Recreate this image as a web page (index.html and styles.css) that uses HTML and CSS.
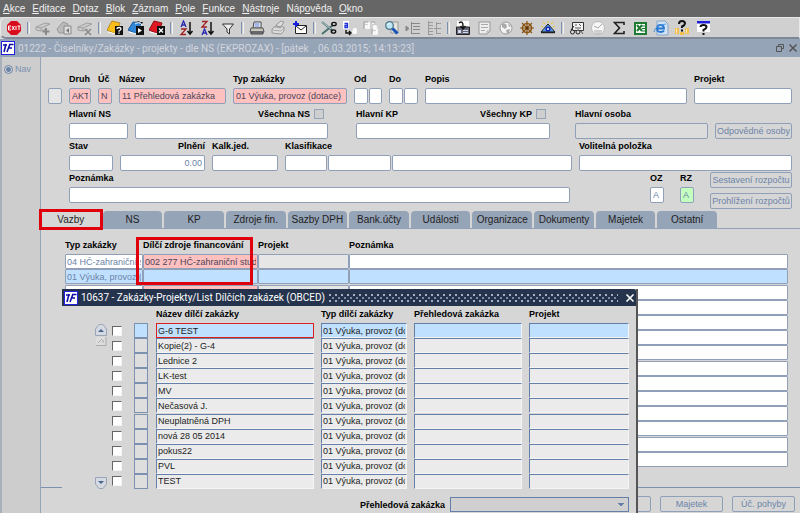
FILE: index.html
```html
<!DOCTYPE html>
<html lang="cs">
<head>
    <meta charset="UTF-8">
    <meta name="viewport" content="width=device-width, initial-scale=1.0">
    <title>01222 - Číselníky/Zakázky</title>
    <link rel="stylesheet" href="styles.css">
</head>
<body>
    <nav class="menubar">
        <a href="#"><u>A</u>kce</a>
        <a href="#"><u>E</u>ditace</a>
        <a href="#"><u>D</u>otaz</a>
        <a href="#"><u>B</u>lok</a>
        <a href="#"><u>Z</u>áznam</a>
        <a href="#"><u>P</u>ole</a>
        <a href="#"><u>F</u>unkce</a>
        <a href="#"><u>N</u>ástroje</a>
        <a href="#">Náp<u>o</u>věda</a>
        <a href="#"><u>O</u>kno</a>
    </nav>

    <div class="toolbar">
        <div class="tools">
            <button aria-label="Konec"><svg viewBox="0 0 16 16"><path d="M5 1h6l4 4v6l-4 4H5l-4-4V5z" fill="#d80c1c"/><path d="M2.500 6v4M2.500 6h2.500M2.500 8h2M2.500 10h2.500M6 6l2.500 4M8.500 6L6 10M10 6v4M11.500 6h3M13 6v4" stroke="#fff" fill="none"/></svg></button>
            <span class="sep"></span>
            <button aria-label="Vložit"><svg viewBox="0 0 16 16"><path d="M1 7l9-4 5 1-9 4zM1 7v3l5 1V8M6 11l5-2" fill="#ccc" stroke="#a0a0a0"/><path d="M11 8v7M7.500 11.500h7" stroke="#888" stroke-width="2"/></svg></button>
            <button aria-label="Kopírovat záznam"><svg viewBox="0 0 16 16"><path d="M1 9l6-7 5 2v9H3z" fill="#bbb" stroke="#999"/><path d="M8 6h7v8H8z" fill="#ddd" stroke="#888"/><path d="M13 8v5l-3-2.500z" fill="#777"/></svg></button>
            <button aria-label="Smazat"><svg viewBox="0 0 16 16"><path d="M1 7l9-4 5 1-9 4zM1 7v3l5 1V8M6 11l5-2" fill="#ccc" stroke="#a0a0a0"/><path d="M8 9l6 6M14 9l-6 6" stroke="#888" stroke-width="1.500"/></svg></button>
            <span class="sep"></span>
            <button aria-label="Zadat dotaz"><svg viewBox="0 0 16 16"><path d="M0 10l5-9 8 2-4 11z" fill="#fbbd18" stroke="#b88a20"/><path d="M1 12l8 2" stroke="#fff"/><path d="M8 6h8v9H8z" fill="#111"/><path d="M10 9q0-1.500 2-1.500T14 9q0 1-2 2v.8M12 12.500v1.300" stroke="#fff" fill="none" stroke-width="1.300"/></svg></button>
            <button aria-label="Provést dotaz"><svg viewBox="0 0 16 16"><path d="M0 10l5-8 8 1-4 11z" fill="#2f86d8" stroke="#205a98"/><path d="M1 12l8 2M7 4q4-3 7 1" stroke="#fff" fill="none"/><path d="M8 2q4-2 6 2l1-2M8 6h8v9H8z" fill="#111"/><path d="M10 8v5l4-2.500z" fill="#fff"/></svg></button>
            <button aria-label="Zrušit dotaz"><svg viewBox="0 0 16 16"><path d="M0 10l5-9 8 2-4 11z" fill="#e01822" stroke="#8d1018"/><path d="M1 12l8 2" stroke="#fff"/><path d="M8 6h8v9H8z" fill="#111"/><path d="M10 8.500l4 4M14 8.500l-4 4" stroke="#fff" stroke-width="1.300"/></svg></button>
            <span class="sep"></span>
            <button aria-label="Seřadit vzestupně"><svg viewBox="0 0 16 16"><path d="M3 7l2.500-6L8 7M4 5h3" fill="none" stroke="#2a2ab0" stroke-width="1.300"/><path d="M3 9h5l-5 5.500h5" fill="none" stroke="#a02020" stroke-width="1.300"/><path d="M12 2v11M9.500 11l2.500 3 2.500-3" stroke="#111" fill="none" stroke-width="1.500"/></svg></button>
            <button aria-label="Seřadit sestupně"><svg viewBox="0 0 16 16"><path d="M3 1.500h5L3 7h5" fill="none" stroke="#a02020" stroke-width="1.300"/><path d="M3 15l2.500-6L8 15M4 13h3" fill="none" stroke="#2a2ab0" stroke-width="1.300"/><path d="M12 2v11M9.500 11l2.500 3 2.500-3" stroke="#111" fill="none" stroke-width="1.500"/></svg></button>
            <button aria-label="Filtr"><svg viewBox="0 0 16 16"><path d="M2.500 4h11L9.500 9v5L7 12V9z" fill="#eee" stroke="#333"/></svg></button>
            <span class="sep"></span>
            <button aria-label="Tisk"><svg viewBox="0 0 16 16"><path d="M5 2h7v6H4z" fill="#fff" stroke="#444"/><path d="M5.500 4h5M5.500 6h5" stroke="#4a6fd0"/><path d="M2 8h12l1 4H1z" fill="#c8c8c0" stroke="#555"/><path d="M2 12h12v2H2z" fill="#8a8a92" stroke="#444"/></svg></button>
            <button aria-label="Náhled tisku"><svg viewBox="0 0 16 16"><path d="M6 5l5-4 3 1-4 6zM2 9l3-3 9 1v4l-3 3-9-1z" fill="#ddd" stroke="#999"/><path d="M2 10l9 1 3-3M4 7l7 1" stroke="#aaa" fill="none"/></svg></button>
            <button aria-label="Nová zpráva"><svg viewBox="0 0 16 16"><path d="M3.500 5.500h11v8h-11z" fill="#fff" stroke="#222"/><path d="M4 6l5 4 5-4" fill="none" stroke="#222"/><path d="M4 1v6M1 4h6" stroke="#1020e0" stroke-width="2"/></svg></button>
            <span class="sep"></span>
            <button aria-label="Vyjmout"><svg viewBox="0 0 16 16"><path d="M1 2l11 9M1 14L12 5" stroke="#4a7070" stroke-width="2"/><path d="M1 2l9 7" stroke="#e8f4f4" stroke-width=".7"/><ellipse cx="13" cy="4" rx="2.200" ry="1.600" fill="none" stroke="#111" stroke-width="1.400"/><ellipse cx="12.500" cy="11.500" rx="2.200" ry="1.600" fill="none" stroke="#111" stroke-width="1.400"/></svg></button>
            <button aria-label="Kopírovat"><svg viewBox="0 0 16 16"><path d="M1 1h6v8H1z" fill="#fff"/><path d="M2.500 3.500h3v4H3v-2h2.500" fill="none" stroke="#2030d8" stroke-width="1.300"/><path d="M4 10v3h4M7 11l2 2-2 2" fill="none" stroke="#111" stroke-width="1.400"/><path d="M11 9h3v4h-3v-2h3" fill="#eee" stroke="#fff" stroke-width="1.400"/></svg></button>
            <button aria-label="Vložit ze schránky"><svg viewBox="0 0 16 16"><path d="M2 3h4v5H2.500V6H6M10 9h4v5h-3.500v-2H14M9 3h3v4M10 6l2 2 2-2" fill="none" stroke="#fff" stroke-width="1.500"/><path d="M1 9V2h4M8 2h4v3M9 14V9" fill="none" stroke="#a0a0a0"/></svg></button>
            <button aria-label="Hledat"><svg viewBox="0 0 16 16"><path d="M7 2h7v11H7z" fill="#e4e4dc" stroke="#999"/><circle cx="5.500" cy="5.500" r="3.800" fill="#bfe6f4" stroke="#50798c" stroke-width="1.300"/><path d="M8.500 8.500l5 5" stroke="#1553b8" stroke-width="3"/><path d="M3.500 5l2-2" stroke="#fff"/></svg></button>
            <button aria-label="Rozbalit"><svg viewBox="0 0 16 16"><path d="M1 6v5l3-2.500zM6.500 2v12M6 3.500h9M8 6.500h7M8 9.500h7M6 13.500h9" fill="#888" stroke="#888"/></svg></button>
            <button aria-label="Stromová struktura"><svg viewBox="0 0 16 16"><path d="M2.500 1v14M2 2.500h5M2 5.500h5M2 8.500h5M2 11.500h5M2 14.500h5M10.500 2v12M10 3.500h5M8 8.500h7M10 13.500h5" fill="none" stroke="#999"/></svg></button>
            <span class="sep"></span>
            <button aria-label="Uložit"><svg viewBox="0 0 16 16"><path d="M2 1h12v6H2z" fill="#fff"/><path d="M1.500 7v7.500h13V7z" fill="#667" stroke="#222"/><path d="M3 10h3v3H3zM8 10h5v1H8zM8 12h5v1H8z" fill="#cfd9f0"/><path d="M4 3q4-3 4 3v3M5.500 6L8 9l2.500-3" fill="none" stroke="#111" stroke-width="1.400"/></svg></button>
            <button aria-label="Poznámka"><svg viewBox="0 0 16 16"><path d="M3 2h11v9l-3 3H3z" fill="#eee" stroke="#999"/><path d="M5 4.500h7M5 7.500h7M5 10.500h4M11 14v-3h3" stroke="#aaa" fill="none"/></svg></button>
            <button aria-label="Web"><svg viewBox="0 0 16 16"><circle cx="8" cy="8" r="6" fill="#f4f4f4" stroke="#999"/><path d="M4 3l4 1 1 3-2 2-3-2zM10 3l3 3-2 1zM8 10l4-1-1 4-2 1z" fill="#aaa"/></svg></button>
            <button aria-label="Navigátor"><svg viewBox="0 0 16 16"><circle cx="8" cy="8" r="4.500" fill="none" stroke="#8a5412" stroke-width="1.600"/><path d="M8 1v14M1 8h14M3 3l10 10M13 3L3 13" stroke="#8a5412" stroke-width="1.200"/><circle cx="8" cy="8" r="1.500" fill="#5c3408"/></svg></button>
            <button aria-label="Zobrazit"><svg viewBox="0 0 16 16"><path d="M8 1v2M3 2l2 2M13 2l-2 2M1 6l2 1M15 6l-2 1" stroke="#e8c820"/><path d="M8 4l7 8H1z" fill="#5aa0e8" stroke="#222"/><circle cx="8" cy="9" r="2.600" fill="#1028b8"/><circle cx="8" cy="9" r="1" fill="#fff"/><path d="M1 12.500h14" stroke="#222" stroke-width="1.500"/></svg></button>
            <span class="sep"></span>
            <button aria-label="Prezentace"><svg viewBox="0 0 16 16"><path d="M3.500 2.500h11v8h-11z" fill="#f4f4f4" stroke="#333"/><path d="M6 5h2M10 4l2 2M6 8h6M12 11l2 3" stroke="#555"/><circle cx="3.500" cy="12" r="2" fill="#ddd" stroke="#222"/><circle cx="9" cy="12" r="2" fill="#ddd" stroke="#222"/><path d="M2 10l3-4" stroke="#222"/></svg></button>
            <button aria-label="Hodiny"><svg viewBox="0 0 16 16"><circle cx="8" cy="8" r="6.500" fill="#f6f6f6" stroke="#bbb"/><path d="M4 6l4 2 4-4M4 11h8M5 13h6" stroke="#aaa" fill="none"/></svg></button>
            <button aria-label="Součet"><svg viewBox="0 0 16 16"><path d="M13 5V2.500H3.500L8.500 8l-5 5.500H13V11" fill="none" stroke="#222" stroke-width="1.600"/></svg></button>
            <button aria-label="Excel"><svg viewBox="0 0 16 16"><path d="M3 3h11v11H3z" fill="#fff" stroke="#1f7a34" stroke-width="2"/><path d="M5 5l5 6M10 5l-5 6" stroke="#1f7a34" stroke-width="2"/><path d="M10 6h3M10 8.500h3M10 11h3" stroke="#1f7a34"/></svg></button>
            <button aria-label="Prohlížeč"><svg viewBox="0 0 16 16"><path d="M4 1h8l3 3v11H4z" fill="#cfe2f6" stroke="#88a4c4"/><path d="M4 8.500h7Q11 5 7.500 5T4 8.500 7.500 12q2.500 0 3.500-1.500" fill="none" stroke="#2878d0" stroke-width="1.900"/><path d="M1 12Q2 5 13 4" fill="none" stroke="#4a98e0"/></svg></button>
            <button aria-label="Nápověda k objektům"><svg viewBox="0 0 16 16"><path d="M1 8h4v6H1zM6 12h4v3H6zM11 8h4v6h-4z" fill="#f3bf50"/><path d="M2 9h1v4H2zM12 9h1v4h-1z" fill="#fff0b8"/><path d="M5 4q0-3 3-3t3 2.500Q11 5 8 6.500V8M8 9.500v2" fill="none" stroke="#111" stroke-width="2"/></svg></button>
            <button aria-label="Nápověda"><svg viewBox="0 0 16 16"><path d="M2 2h13v10H2z" fill="#fff"/><path d="M2 1h13v2.500H2z" fill="#2020d8"/><path d="M5.500 7q0-2 3-2t3 2q0 1.500-3 3v1.500M8.500 13v2" fill="none" stroke="#111" stroke-width="2"/></svg></button>
        </div>
    </div>

    <header class="titlebar">
        <svg class="logo" viewBox="0 0 14 14"><path d="M0 0h14v14H0z" fill="#2222e0"/><path d="M1 1h12v12H1z" fill="#fff"/><path d="M2 4h4M5 3L3 11M9 3L6 11M8 3.500h4.500M7.500 7h3.500" stroke="#1010a8" stroke-width="1.600"/></svg>
        <h1>01222 - Číselníky/Zakázky - projekty - dle NS (EKPROZAX) - [pátek&nbsp; , 06.03.2015; 14:13:23]</h1>
        <button aria-label="Obnovit"><svg viewBox="0 0 10 10"><path d="M3.500 3V1.500h5v4H7M1.500 3.500h5v5h-5z" fill="none" stroke="#555"/></svg></button>
        <button aria-label="Zavřít"><svg viewBox="0 0 10 10"><path d="M1.500 1.500l7 7M8.500 1.500l-7 7" stroke="#555" stroke-width="1.500"/></svg></button>
    </header>

    <div class="workspace">
        <aside class="side">
            <label><input type="radio" name="nav" checked>Nav</label>
        </aside>

        <main class="main">
            <form class="form">
                <div class="row row-1">
                    <div class="field"><span class="caption"></span><input type="text" class="plain" aria-label="Výběr"></div>
                    <div class="field"><label for="druh">Druh</label><input type="text" id="druh" class="required" value="AKT"></div>
                    <div class="field"><label for="uc">Úč</label><input type="text" id="uc" class="required" value="N"></div>
                    <div class="field"><label for="nazev">Název</label><input type="text" id="nazev" class="required" value="11 Přehledová zakázka"></div>
                    <div class="field"><label for="typ">Typ zakázky</label><input type="text" id="typ" class="required" value="01 Výuka, provoz (dotace)"></div>
                    <div class="field"><label for="od">Od</label><div class="pair"><input type="text" id="od"><input type="text" aria-label="Od rok"></div></div>
                    <div class="field"><label for="do">Do</label><div class="pair"><input type="text" id="do"><input type="text" aria-label="Do rok"></div></div>
                    <div class="field"><label for="popis">Popis</label><input type="text" id="popis"></div>
                    <div class="field"><label for="projekt">Projekt</label><input type="text" id="projekt"></div>
                </div>
                <div class="row row-2">
                    <div class="field"><label for="ns">Hlavní NS</label><input type="text" id="ns"></div>
                    <div class="field"><label class="check">Všechna NS <input type="checkbox"></label><input type="text" aria-label="Název NS"></div>
                    <div class="field kp"><div class="caption"><label for="kp">Hlavní KP</label><label class="check">Všechny KP <input type="checkbox"></label></div><input type="text" id="kp"></div>
                    <div class="field osoba"><label for="osoba">Hlavní osoba</label><input type="text" id="osoba" class="locked" readonly></div>
                    <button type="button" class="btn low">Odpovědné osoby</button>
                </div>
                <div class="row row-3">
                    <div class="field"><label for="stav">Stav</label><input type="text" id="stav"></div>
                    <div class="field"><label for="plneni" class="right">Plnění</label><input type="text" id="plneni" class="right" value="0.00"></div>
                    <div class="field"><label for="kalk">Kalk.jed.</label><input type="text" id="kalk"></div>
                    <div class="field"><label for="klas">Klasifikace</label><div class="triple"><input type="text" id="klas"><input type="text" aria-label="Klasifikace 2"><input type="text" aria-label="Klasifikace 3"></div></div>
                    <div class="field"><label for="volit">Volitelná položka</label><input type="text" id="volit"></div>
                </div>
                <div class="row row-4">
                    <div class="field pozn"><label for="pozn">Poznámka</label><input type="text" id="pozn"></div>
                    <div class="field"><label for="oz">OZ</label><input type="text" id="oz" value="A"></div>
                    <div class="field"><label for="rz">RZ</label><input type="text" id="rz" class="green" value="A"></div>
                    <div class="stack">
                        <button type="button" class="btn">Sestavení rozpočtu</button>
                        <button type="button" class="btn">Prohlížení rozpočtů</button>
                    </div>
                </div>
            </form>

            <div class="tabbar">
                <div class="tabs">
                    <button class="tab active">Vazby</button>
                    <button class="tab">NS</button>
                    <button class="tab">KP</button>
                    <button class="tab">Zdroje fin.</button>
                    <button class="tab">Sazby DPH</button>
                    <button class="tab">Bank.účty</button>
                    <button class="tab">Události</button>
                    <button class="tab">Organizace</button>
                    <button class="tab">Dokumenty</button>
                    <button class="tab">Majetek</button>
                    <button class="tab">Ostatní</button>
                </div>
            </div>

            <div class="links">
                <table class="grid">
                    <thead>
                        <tr><th class="c-typ">Typ zakázky</th><th class="c-zdroj">Dílčí zdroje financování</th><th class="c-proj">Projekt</th><th>Poznámka</th></tr>
                    </thead>
                    <tbody id="linkRows"></tbody>
                </table>
                <div class="mark"></div>
            </div>

            <footer class="footer">
                <button class="btn" aria-label="Další"></button>
                <button class="btn">Majetek</button>
                <button class="btn">Úč. pohyby</button>
            </footer>
        </main>
    </div>

    <section class="dialog">
        <header class="dialog-title">
            <svg class="logo" viewBox="0 0 14 14"><path d="M0 0h14v14H0z" fill="#2222e0"/><path d="M1 1h12v12H1z" fill="#fff"/><path d="M2 4h4M5 3L3 11M9 3L6 11M8 3.500h4.500M7.500 7h3.500" stroke="#1010a8" stroke-width="1.600"/></svg>
            <h2>10637 - Zakázky-Projekty/List Dílčích zakázek (OBCED)</h2>
            <span class="grip"></span>
            <button aria-label="Zavřít"><svg viewBox="0 0 10 10"><path d="M1.500 1.500l7 7M8.500 1.500l-7 7" stroke="#fff" stroke-width="1.600"/></svg></button>
        </header>
        <div class="dialog-body">
            <div class="scroller">
                <div class="scroll-top">
                    <button aria-label="Nahoru"><svg viewBox="0 0 12 12"><path d="M.5 11.500V5L4 .5h4L11.500 5v6.500z" fill="#d4d9e2" stroke="#9aa6b8"/><path d="M3 8h6L6 5z" fill="#4a6490"/></svg></button>
                    <button aria-label="Posuvník"><svg viewBox="0 0 12 12"><path d="M1 1h10v8H1z" fill="#ddd"/><path d="M1 9.500h10V1M3 7l4-4M8 7V4" fill="none" stroke="#aaa"/></svg></button>
                </div>
                <button aria-label="Dolů"><svg viewBox="0 0 12 12"><path d="M.5.500v6.500L4 11.500h4L11.500 7V.500z" fill="#d4d9e2" stroke="#9aa6b8"/><path d="M3 4h6L6 7z" fill="#4a6490"/></svg></button>
            </div>
            <table class="list">
                <thead>
                    <tr><th class="d-check"></th><th class="d-flag"></th><th class="d-name">Název dílčí zakázky</th><th class="d-typ">Typ dílčí zakázky</th><th class="d-over">Přehledová zakázka</th><th>Projekt</th></tr>
                </thead>
                <tbody id="orderRows"></tbody>
            </table>
        </div>
        <div class="dialog-foot">
            <label for="over">Přehledová zakázka</label>
            <select id="over"><option></option></select>
        </div>
    </section>

    <script>
        const orders = ['G-6 TEST', 'Kopie(2) - G-4', 'Lednice 2', 'LK-test', 'MV', 'Nečasová J.',
            'Neuplatněná DPH', 'nová 28 05 2014', 'pokus22', 'PVL', 'TEST'];
        const links = [
            ['04 HČ-zahraniční st', '002 277 HČ-zahraniční studenti'],
            ['01 Výuka, provoz (dotace)', '']
        ];

        function cell(value, label, cls) {
            return '<td><input type="text" class="' + (cls || '') + '" aria-label="' + label + '" value="' + value + '"></td>';
        }

        let html = '';
        for (let i = 0; i < 14; i++) {
            const row = links[i] || ['', ''];
            html += '<tr class="' + (i === 1 ? 'selected' : '') + '">'
                + cell(row[0], 'Typ zakázky')
                + cell(row[1], 'Dílčí zdroje financování', 'required')
                + cell('', 'Projekt', 'plain')
                + cell('', 'Poznámka') + '</tr>';
        }
        document.getElementById('linkRows').innerHTML = html;

        document.getElementById('orderRows').innerHTML = orders.map(function (name, i) {
            return '<tr class="' + (i === 0 ? 'selected' : '') + '">'
                + '<td><input type="checkbox" aria-label="Vybrat ' + name + '"></td>'
                + cell('', 'Příznak', 'flag')
                + cell(name, 'Název dílčí zakázky', 'name')
                + cell('01 Výuka, provoz (dotace)', 'Typ dílčí zakázky')
                + cell('', 'Přehledová zakázka')
                + cell('', 'Projekt') + '</tr>';
        }).join('');

        // caret goes to the end of the first order name
        const first = document.querySelector('.list .selected .name');
        first.focus();
        first.setSelectionRange(first.value.length, first.value.length);
    </script>
</body>
</html>
```
FILE: styles.css
```css
* {
    box-sizing: border-box;
}
body {
    margin: 0;
    height: 100vh;
    display: flex;
    flex-direction: column;
    position: relative;
    overflow: hidden;
    background: #d6d6d6;
    font-family: "Liberation Sans", Arial, sans-serif;
    font-size: 9px;
    color: #000;
}
button, input, select {
    font: inherit;
    margin: 0;
    padding: 0;
}
button {
    border: none;
    background: none;
}
svg {
    display: block;
}
label, th {
    font-weight: bold;
    line-height: 12px;
    white-space: nowrap;
}

/* menu */
.menubar {
    display: flex;
    gap: 7px;
    height: 17px;
    padding: 0 3px;
    background: #666;
}
.menubar a {
    color: #f0f0f0;
    font-size: 10px;
    line-height: 17px;
    text-decoration: none;
}

/* toolbar */
.toolbar {
    background: #d0d0d0;
    border: 1px solid #e8e8e8;
    border-bottom: 2px solid #808898;
    border-radius: 6px 0 0 6px;
    padding: 2px 5px;
    height: 22px;
}
.tools {
    display: flex;
    align-items: center;
    justify-content: space-between;
    max-width: 706px;
}
.tools button, .tools svg {
    width: 16px;
    height: 16px;
}
.sep {
    width: 3px;
    height: 12px;
    border-left: 1px solid #7c90b0;
    border-right: 1px solid #f0f0f0;
}

/* window title */
.titlebar {
    display: flex;
    align-items: center;
    gap: 3px;
    height: 18px;
    padding: 0 2px 0 1px;
    background: #96a4b8;
}
.logo {
    width: 14px;
    height: 14px;
    flex: none;
}
.titlebar h1 {
    flex: 1;
    margin: 0;
    font-family: Roboto, "Liberation Sans", sans-serif;
    font-size: 10px;
    font-weight: normal;
    color: #d2d6dc;
}
.titlebar button {
    width: 10px;
    height: 10px;
}

.workspace {
    flex: 1;
    display: flex;
    min-height: 0;
}
.side {
    width: 41px;
    flex: none;
    padding: 6px 2px;
    border-left: 2px solid #a8b0bc;
    border-right: 1px solid #96a4b8;
    background: #cdcdcd;
}
.side label {
    display: flex;
    align-items: center;
    gap: 2px;
    font-weight: normal;
    color: #7c90b0;
}
.side input {
    appearance: none;
    width: 9px;
    height: 9px;
    border: 1px solid #6c84a8;
    border-radius: 50%;
    background: radial-gradient(#6c84a8 2px, #d6d6d6 3px);
}
.main {
    flex: 1;
    min-width: 0;
    display: flex;
    flex-direction: column;
}

/* form */
.form {
    display: flex;
    flex-direction: column;
    gap: 1px;
    padding: 16px 8px 0 7px;
}
.row {
    display: grid;
    gap: 7px;
    padding-left: 21px;
}
.row-1 {
    grid-template-columns: 14px 22px 14px 107px 114px 28px 29px 1fr 98px;
    padding: 0 0 3px;
}
.row-2 {
    grid-template-columns: 59px 193px 215px 1fr 77px;
}
.row-3 {
    grid-template-columns: 44px 85px 66px 287px 1fr;
}
.row-4 {
    grid-template-columns: 1fr 14px 14px 82px;
    column-gap: 16px;
    align-items: start;
}
.field {
    display: flex;
    flex-direction: column;
    gap: 3px;
    min-width: 0;
}
.kp {
    margin-left: 21px;
}
.osoba {
    margin-left: 18px;
}
.pozn {
    margin-right: 64px;
}
.caption {
    display: flex;
    justify-content: space-between;
    height: 12px;
}
.check {
    display: flex;
    align-items: center;
    justify-content: flex-end;
    gap: 4px;
    padding-right: 4px;
}
.check input {
    appearance: none;
    width: 10px;
    height: 10px;
    border: 1px solid #96a4b8;
    background: #cfcfcf;
}
.pair, .triple {
    display: grid;
    grid-template-columns: 1fr 1fr;
    gap: 1px;
}
.triple {
    grid-template-columns: 42px 63px 1fr;
}
.right {
    text-align: right;
}
input[type="text"] {
    display: block;
    width: 100%;
    min-width: 0;
    height: 16px;
    padding: 0 2px;
    border: 1px solid #90a0b8;
    border-radius: 2px;
    background: #fff;
    color: #6c84a8;
    outline: none;
}
input.required {
    background: #ffc0c0;
    color: #4c4658;
}
input.plain {
    background: #e6e6e6;
}
input.locked {
    background: #dcdcdc;
}
input.green {
    background: #c4ffc0;
}
.btn {
    height: 16px;
    border: 1px solid #90a0b8;
    border-radius: 2px;
    color: #6c84a8;
    white-space: nowrap;
}
.low {
    align-self: end;
}
.stack {
    display: flex;
    flex-direction: column;
    gap: 5px;
}

/* tabs */
.tabbar {
    margin-top: 2px;
    border-bottom: 1px solid #90a0b8;
}
.tabs {
    display: flex;
    gap: 2px;
    max-width: 676px;
    height: 17px;
}
.tab {
    flex: 1 1 0;
    min-width: 0;
    border-radius: 4px 4px 0 0;
    background: #96a4b8;
    font-size: 10px;
    color: #222;
    white-space: nowrap;
}
.tab.active {
    background: #d6d6d6;
    border-radius: 0;
    outline: 3px solid #e0000c;
    outline-offset: -1px;
    z-index: 1;
}

/* linked records */
.links {
    position: relative;
    padding: 10px 12px 0 24px;
}
table {
    width: 100%;
    table-layout: fixed;
    border-spacing: 0;
}
th, td {
    padding: 0;
    text-align: left;
}
.grid {
    height: 228px;
}
.grid th {
    height: 15px;
    vertical-align: top;
}
.grid input[type="text"] {
    height: 15px;
    padding: 0 1px;
    border-radius: 1px;
}
.c-typ { width: 78px; }
.c-zdroj { width: 115px; }
.c-proj { width: 91px; }
.grid .selected input {
    background: #c0e0ff;
}
.mark {
    position: absolute;
    left: 95px;
    top: 8px;
    width: 117px;
    height: 48px;
    border: 3px solid #e0000c;
}
.footer {
    display: flex;
    justify-content: flex-end;
    gap: 9px;
    margin-top: auto;
    padding: 8px 5px 1px;
    border-top: 1px solid #7c90b0;
}
.footer .btn {
    width: 63px;
}

/* dialog */
.dialog {
    position: absolute;
    left: 62px;
    top: 289px;
    width: 576px;
    background: #d6d6d6;
    border-right: 2px solid #555;
    z-index: 2;
}
.dialog-title {
    display: flex;
    align-items: center;
    gap: 3px;
    height: 17px;
    padding: 0 1px 0 2px;
    background: #25344c;
    border-radius: 0 2px 0 0;
}
.dialog-title h2 {
    margin: 0;
    font-family: Roboto, "Liberation Sans", sans-serif;
    font-size: 10px;
    font-weight: normal;
    color: #fff;
    white-space: nowrap;
}
.dialog-title button {
    width: 10px;
    height: 10px;
}
.grip {
    flex: 1;
    height: 8px;
    margin: 0 4px 0 1px;
    background-image: radial-gradient(circle at 1px 1px, #a4b0c4 1px, transparent 1px), radial-gradient(circle at 1px 1px, #7c8aa2 1px, transparent 1px);
    background-size: 6px 6px;
    background-position: 0 0, 3px 3px;
}
.dialog-body {
    display: flex;
    padding: 2px 0 0 33px;
}
.scroller {
    display: flex;
    flex-direction: column;
    justify-content: space-between;
    flex: none;
    width: 17px;
    padding-top: 16px;
}
.scroller button, .scroller svg {
    display: block;
    width: 12px;
    height: 12px;
}
.list {
    flex: 1;
    height: 181px;
}
.list th {
    height: 15px;
    vertical-align: top;
}
.d-check { width: 22px; }
.d-flag { width: 22px; }
.d-name { width: 165px; }
.d-typ { width: 93px; }
.d-over { width: 115px; }
.list input[type="text"] {
    width: calc(100% - 7px);
    height: 15px;
    padding: 0 1px;
    border: 1px solid #f4f4f4;
    border-top-color: #6480a8;
    border-left-color: #6480a8;
    border-radius: 0;
    background: #ebebeb;
    color: #222;
}
.list input.flag[type="text"] {
    width: 14px;
    border-color: #7c90b0;
    background: #dedede;
}
.list .selected input[type="text"] {
    background: #c0e0ff;
}
.list .selected input.name[type="text"] {
    border-color: #e02020;
}
.list input[type="checkbox"] {
    display: block;
    appearance: none;
    width: 10px;
    height: 10px;
    border: 1px solid #f4f4f4;
    border-top-color: #666;
    border-left-color: #666;
    background: #fff;
}
.dialog-foot {
    display: flex;
    align-items: center;
    justify-content: flex-end;
    gap: 5px;
    padding: 8px 7px 8px 0;
}
.dialog-foot select {
    appearance: none;
    width: 179px;
    height: 15px;
    border: 1px solid #6480a8;
    border-radius: 0;
    background: linear-gradient(45deg, transparent 50%, #6480a8 50%) right 7px center / 4px 4px no-repeat, linear-gradient(-45deg, transparent 50%, #6480a8 50%) right 3px center / 4px 4px no-repeat, #d0d0d0;
}
```
